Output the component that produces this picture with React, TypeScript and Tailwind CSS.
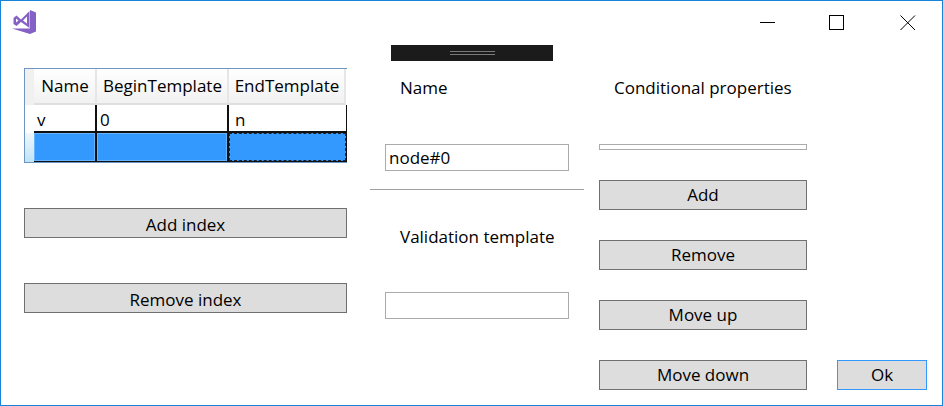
const FONT = "font-['Open_Sans',sans-serif]"

function VsLogo() {
  return (
    <svg width="24" height="24" viewBox="0 0 24 24" className="ml-[11px] mt-[9px]">
      <path
        fill="#8661c5"
        fillRule="evenodd"
        d="M1.5 8 L4.5 5.5 L9 9.5 L17.5 1 V18 L9 12 L4.5 16 L1.5 14 Z M4 8.5 V12.5 L6.5 10.5 Z M11 10.5 L15 13.5 V6.5 Z"
      />
      <path fill="#8661c5" d="M18 0 L24 2.5 V21.5 L18 24 L0 18.5 H18 Z" />
    </svg>
  )
}

function WindowControls() {
  return (
    <div className="flex items-start">
      <svg width="16" height="16" viewBox="0 0 16 16" className="mt-[14px] mr-[53px]">
        <path d="M0 7.5 H15" stroke="#000" strokeWidth="1" />
      </svg>
      <svg width="16" height="16" viewBox="0 0 16 16" className="mt-[14px] mr-[55px]">
        <rect x="0.5" y="0.5" width="14" height="14" fill="none" stroke="#000" strokeWidth="1" />
      </svg>
      <svg width="16" height="16" viewBox="0 0 16 16" className="mt-[14px] mr-[26px]">
        <path d="M0.5 0.5 L15 15 M15 0.5 L0.5 15" stroke="#000" strokeWidth="1" />
      </svg>
    </div>
  )
}

function Btn({ label, className }: { label: string; className: string }) {
  return (
    <button className={`block h-[30px] bg-[#dddddd] border border-[#707070] text-[17px] leading-[28px] text-black text-center ${className}`}>
      {label}
    </button>
  )
}

function IndexTable() {
  const headerCell = 'h-[36px] flex items-center justify-center pl-px border-r-2 border-[#e6e6e6] bg-gradient-to-b from-[#ffffff] to-[#f1f1f1] border-b-2 border-b-[#dfdfdf]'
  return (
    <div className="w-[323px] h-[95px] border border-[#6d97c2] grid grid-cols-[9px_63px_132px_117px_1px] grid-rows-[36px_28px_29px] bg-white">
      <div className="bg-[#f0f0f0]" />
      <div className={headerCell}>Name</div>
      <div className={headerCell}>BeginTemplate</div>
      <div className={headerCell}>EndTemplate</div>
      <div className="bg-white" />

      <div className="bg-white" />
      <div className="border-r-2 border-b-2 border-[#101010] pl-[3px] leading-[30px]">v</div>
      <div className="border-r-2 border-b-2 border-[#101010] pl-[3px] leading-[30px]">0</div>
      <div className="border-b-2 border-[#101010] pl-[6px] leading-[30px]">n</div>
      <div className="bg-[#101010]" />

      <div className="bg-gradient-to-b from-[#eef7fd] to-[#bfe3f7]" />
      <div className="border-r-2 border-b border-[#101010] bg-[#3399ff]"><div className="h-full border border-[#66b3ff]" /></div>
      <div className="border-r-2 border-b border-[#101010] bg-[#3399ff]"><div className="h-full border border-[#66b3ff]" /></div>
      <div className="border-b border-[#101010] bg-[#3399ff]"><div className="h-full border border-dashed border-[#222222]" /></div>
      <div className="bg-[#101010]" />
    </div>
  )
}

export default function App() {
  return (
    <div className={`${FONT} w-[943px] h-[406px] overflow-hidden bg-white border border-[#1883d7] text-[17px] text-black`}>
      <div className="h-[44px] flex justify-between">
        <VsLogo />
        <WindowControls />
      </div>

      <div className="flex pl-[23px]">
        <div className="w-[323px] pt-[23px]">
          <IndexTable />
          <Btn label="Add index" className="w-[323px] mt-[45px] pt-[2px]" />
          <Btn label="Remove index" className="w-[323px] mt-[45px] pt-[2px]" />
        </div>

        <div className="w-[214px] ml-[23px]">
          <div className="w-[162px] h-[16px] ml-[21px] bg-[#1b1b1b] flex items-center justify-center">
            <div className="w-[45px] h-[4px] border-y border-[#7a7a7a]" />
          </div>
          <div className="ml-[30px] mt-[15px] leading-[24px]">Name</div>
          <div className="ml-[15px] mt-[44px] w-[184px] h-[27px] border border-[#ababab] pl-[3px] leading-[25px]">node#0</div>
          <div className="mt-[18px] h-px bg-[#a0a0a0]" />
          <div className="ml-[30px] mt-[35px] leading-[24px]">Validation template</div>
          <div className="ml-[15px] mt-[43px] w-[184px] h-[27px] border border-[#ababab]" />
        </div>

        <div className="w-[208px] ml-[15px] pt-[31px]">
          <div className="ml-[15px] leading-[24px]">Conditional properties</div>
          <div className="mt-[44px] h-[6px] border border-[#ababab]" />
          <Btn label="Add" className="w-[208px] mt-[30px]" />
          <Btn label="Remove" className="w-[208px] mt-[30px]" />
          <Btn label="Move up" className="w-[208px] mt-[30px]" />
          <Btn label="Move down" className="w-[208px] mt-[30px]" />
        </div>

        <div className="ml-[30px] pt-[315px]">
          <Btn label="Ok" className="w-[90px] !border-[#3399ff]" />
        </div>
      </div>
    </div>
  )
}
